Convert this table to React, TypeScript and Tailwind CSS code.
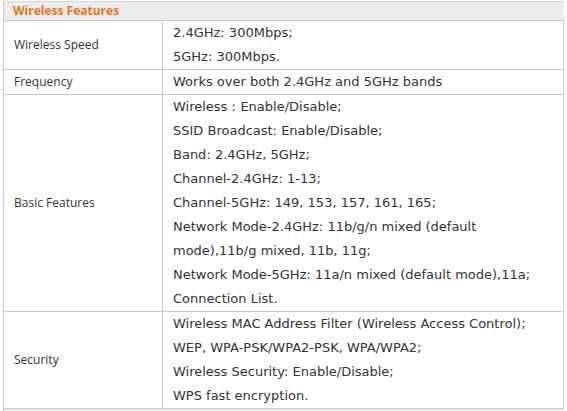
import React from "react";

/*** spec rows ***/
const specRows = [
  {
    label: "Wireless Speed",
    lines: ["2.4GHz: 300Mbps;", "5GHz: 300Mbps."],
  },
  {
    label: "Frequency",
    lines: ["Works over both 2.4GHz and 5GHz bands"],
  },
  {
    label: "Basic Features",
    lines: [
      "Wireless：Enable/Disable;",
      "SSID Broadcast: Enable/Disable;",
      "Band: 2.4GHz, 5GHz;",
      "Channel-2.4GHz: 1-13;",
      "Channel-5GHz: 149, 153, 157, 161, 165;",
      "Network Mode-2.4GHz: 11b/g/n mixed (default",
      "mode),11b/g mixed, 11b, 11g;",
      "Network Mode-5GHz: 11a/n mixed (default mode),11a;",
      "Connection List.",
    ],
  },
  {
    label: "Security",
    lines: [
      "Wireless MAC Address Filter (Wireless Access Control);",
      "WEP, WPA-PSK/WPA2-PSK, WPA/WPA2;",
      "Wireless Security: Enable/Disable;",
      "WPS fast encryption.",
    ],
  },
];

export default function App() {
  return (
    <div
      className="w-[567px] h-[411px] overflow-hidden bg-white pl-[3px] pt-[1px]"
      style={{ fontFamily: '"Open Sans", "Liberation Sans", sans-serif' }}
    >
      <div className="w-[561px] border-l border-[#c9c9c9]">
        <div className="h-[20px] bg-[#ececec] border-t border-[#d6d6d6] border-b border-b-[#c9c9c9] flex items-center pl-[9px]">
          <span className="text-[12px] font-bold text-[#e8731f] leading-none">
            Wireless Features
          </span>
        </div>
        {specRows.map((row) => (
          <div
            key={row.label}
            className="flex border-b border-[#c9c9c9] border-r"
          >
            <div className="w-[159px] shrink-0 border-r border-[#c9c9c9] flex items-center pl-[10px] text-[12px] text-[#333]">
              {row.label}
            </div>
            <div
              className="pl-[10px] text-[13px] leading-[24px] text-[#333]"
              style={{ fontFamily: '"DejaVu Sans", "Open Sans", sans-serif' }}
            >
              {row.lines.map((l) => (
                <div key={l} className="whitespace-nowrap">
                  {l}
                </div>
              ))}
            </div>
          </div>
        ))}
        <div className="h-[10px] bg-[#ececec]" />
      </div>
    </div>
  );
}
